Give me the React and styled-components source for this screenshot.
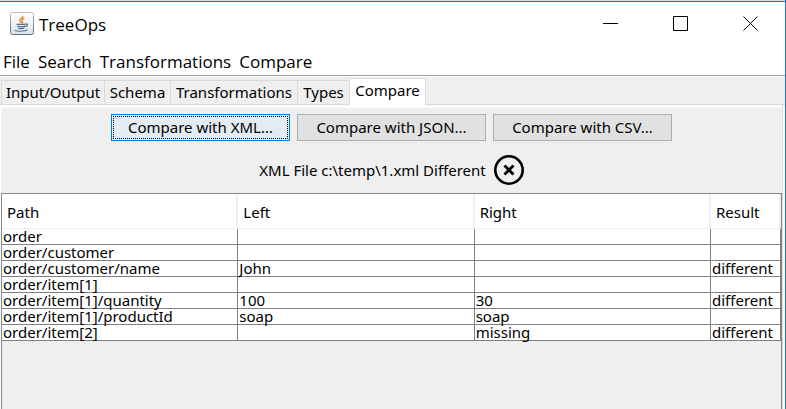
import React, { useState } from "react";
import styled, { createGlobalStyle, css } from "styled-components";

const GlobalStyle = createGlobalStyle`
  * { box-sizing: border-box; }
  body {
    margin: 0;
    background: #fff;
    color: #000;
    font-family: "Noto Sans", "Open Sans", sans-serif;
    font-size: 15px;
  }
  button { font: inherit; color: inherit; border: 0; border-radius: 0; padding: 0; background: none; }
`;

const Window = styled.div`
  display: flex;
  flex-direction: column;
  min-height: 100vh;
  background: #fff;
  border-right: 1px solid #1a7ac9;
`;

const TopEdge = styled.div`
  height: 2px;
  background: #d9dadb;
  border-bottom: 1px solid #1a7ac9;
`;

const TitleBar = styled.header`
  display: flex;
  align-items: center;
  height: 43px;
  padding-left: 10px;
`;

const Title = styled.h1`
  flex: 1;
  margin: 2px 0 0 5px;
  font-family: "Open Sans", sans-serif;
  font-size: 17px;
  line-height: 24px;
  font-weight: 400;
`;

const WindowButton = styled.button`
  display: flex;
  align-items: center;
  justify-content: center;
  width: 70px;
  height: 43px;
`;

const MenuBar = styled.nav`
  display: flex;
  gap: 8px;
  height: 31px;
  padding: 5px 3px 0;
  border-bottom: 1px solid #a0a0a0;
`;

const MenuItem = styled.button`
  height: 24px;
  font-family: "Open Sans", sans-serif;
  font-size: 17px;
  line-height: 24px;
`;

const TabStrip = styled.div`
  display: flex;
  align-items: flex-end;
  height: 28px;
  padding-left: 1px;
  margin-top: 1px;
  background: #efefef;
  border-bottom: 1px solid #d9d9d9;
`;

const Tab = styled.button`
  width: ${(p) => p.$width}px;
  height: 24px;
  line-height: 23px;
  border-top: 1px solid #d9d9d9;
  border-left: 1px solid #d9d9d9;
  white-space: nowrap;
  ${(p) =>
    p.$active &&
    css`
      height: 27px;
      margin-bottom: -1px;
      padding-bottom: 3px;
      background: #fff;
      border-right: 1px solid #d9d9d9;
    `}
`;

const PaneFrame = styled.main`
  flex: 1;
  display: flex;
  margin-right: 2px;
  padding: 3px 0 0 1px;
  border-right: 1px solid #d9d9d9;
`;

const Pane = styled.div`
  flex: 1;
  min-width: 0;
  display: flex;
  flex-direction: column;
  background: #efefef;
`;

const Actions = styled.div`
  display: flex;
  justify-content: center;
  gap: 7px;
  padding-top: 6px;
`;

const ActionButton = styled.button`
  width: ${(p) => (p.$wide ? 189 : 179)}px;
  height: 27px;
  line-height: 25px;
  background: #e1e1e1;
  border: 1px solid #adadad;
  ${(p) =>
    p.$focused &&
    css`
      background: #e3ebf3;
      border-color: #0078d7;
      outline: 1px dotted #000;
      outline-offset: -3px;
    `}
`;

const Status = styled.div`
  display: flex;
  align-items: center;
  justify-content: center;
  gap: 8px;
  height: 30px;
  margin: 14px 0 8px;
`;

const ScrollPane = styled.div`
  flex: 1;
  border: solid #828790;
  border-width: 1px 1px 0;
`;

const Grid = styled.table`
  width: 100%;
  table-layout: fixed;
  border-collapse: separate;
  border-spacing: 0;
  background: #fff;
`;

const ResultColumn = styled.col`
  width: 70px;
`;

const HeadCell = styled.th`
  height: 35px;
  padding: 1px 5px 0;
  font-weight: 400;
  text-align: left;
  border-right: 2px solid #efefef;
  border-bottom: 1px solid #efefef;
`;

const Cell = styled.td`
  height: 16px;
  padding: 0 0 0 1px;
  border-right: 1px solid #808080;
  border-bottom: 1px solid #808080;
`;

const CellText = styled.span`
  display: block;
  height: 15px;
  line-height: 15px;
  white-space: nowrap;
`;

function JavaIcon() {
  return (
    <svg width="24" height="24" viewBox="0 0 24 24" aria-hidden="true">
      <defs>
        <linearGradient id="plate" x1="0" y1="0" x2="0" y2="1">
          <stop offset="0" stopColor="#fff" />
          <stop offset="1" stopColor="#dfe3e7" />
        </linearGradient>
        <linearGradient id="rim" x1="0" y1="0" x2="0" y2="1">
          <stop offset="0" stopColor="#b4bcc4" />
          <stop offset="1" stopColor="#587080" />
        </linearGradient>
      </defs>
      <rect x="0.5" y="0.5" width="23" height="22" rx="2" fill="url(#plate)" stroke="url(#rim)" />
      <path d="M12.8 3.8c.8 2-3.600 2.900-3.100 4.900.2 1 1.300 1.500 1.700 2.300M14.300 6.200c-2.400 1-3 2-1.900 3.200.5.700.2 1.300-.4 1.900" fill="none" stroke="#ee7c22" strokeWidth="1.300" />
      <path d="M6.500 12.300h9M7.300 14c2 .9 5.300.9 7.700.2M8 16c2 .7 4.300.7 6.300 0M15.500 12c2.800-.6 2.500 2-.4 2.900M4.500 18.200c3 1.500 10.500 1.400 13.200-.4" fill="none" stroke="#54758e" strokeWidth="1.200" />
    </svg>
  );
}

function DifferentIcon() {
  return (
    <svg width="30" height="30" viewBox="0 0 30 30" role="img" aria-label="Different">
      <circle cx="15" cy="15" r="13.700" fill="none" stroke="#000" strokeWidth="2.600" />
      <path d="M10.500 10.500l9 9M19.500 10.500l-9 9" stroke="#000" strokeWidth="2.800" />
    </svg>
  );
}

const windowButtons = [
  { label: "Minimize", path: "M0 7.500H15" },
  { label: "Maximize", path: "M.5.5h14v14H.5z" },
  { label: "Close", path: "M.5.5l14 14M14.500.5l-14 14" },
];

const menus = ["File", "Search", "Transformations", "Compare"];

const tabs = [
  { label: "Input/Output", width: 103 },
  { label: "Schema", width: 66 },
  { label: "Transformations", width: 127 },
  { label: "Types", width: 52 },
  { label: "Compare", width: 77 },
];

const rows = [
  ["order", "", "", ""],
  ["order/customer", "", "", ""],
  ["order/customer/name", "John", "", "different"],
  ["order/item[1]", "", "", ""],
  ["order/item[1]/quantity", "100", "30", "different"],
  ["order/item[1]/productId", "soap", "soap", ""],
  ["order/item[2]", "", "missing", "different"],
];

export default function App() {
  const [activeTab, setActiveTab] = useState("Compare");
  return (
    <>
      <GlobalStyle />
      <Window>
        <TopEdge />
        <TitleBar>
          <JavaIcon />
          <Title>TreeOps</Title>
          {windowButtons.map((b) => (
            <WindowButton key={b.label} aria-label={b.label}>
              <svg width="15" height="15" viewBox="0 0 15 15" aria-hidden="true">
                <path d={b.path} fill="none" stroke="#000" />
              </svg>
            </WindowButton>
          ))}
        </TitleBar>
        <MenuBar>
          {menus.map((m) => (
            <MenuItem key={m}>{m}</MenuItem>
          ))}
        </MenuBar>
        <TabStrip role="tablist">
          {tabs.map((t) => (
            <Tab
              key={t.label}
              role="tab"
              aria-selected={activeTab === t.label}
              $active={activeTab === t.label}
              $width={t.width}
              onClick={() => setActiveTab(t.label)}
            >
              {t.label}
            </Tab>
          ))}
        </TabStrip>
        <PaneFrame>
          <Pane>
            <Actions>
              <ActionButton $focused>Compare with XML...</ActionButton>
              <ActionButton $wide>Compare with JSON...</ActionButton>
              <ActionButton>Compare with CSV...</ActionButton>
            </Actions>
            <Status>
              <span>XML File c:\temp\1.xml Different</span>
              <DifferentIcon />
            </Status>
            <ScrollPane>
              <Grid>
                <colgroup>
                  <col />
                  <col />
                  <col />
                  <ResultColumn />
                </colgroup>
                <thead>
                  <tr>
                    {["Path", "Left", "Right", "Result"].map((h) => (
                      <HeadCell key={h} scope="col">{h}</HeadCell>
                    ))}
                  </tr>
                </thead>
                <tbody>
                  {rows.map((row) => (
                    <tr key={row[0]}>
                      {row.map((value, i) => (
                        <Cell key={i}>
                          <CellText>{value}</CellText>
                        </Cell>
                      ))}
                    </tr>
                  ))}
                </tbody>
              </Grid>
            </ScrollPane>
          </Pane>
        </PaneFrame>
      </Window>
    </>
  );
}
